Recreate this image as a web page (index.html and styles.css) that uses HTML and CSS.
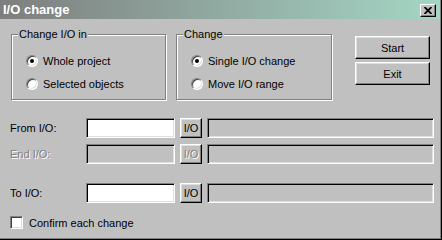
FILE: index.html
```html
<!DOCTYPE html>
<html>
<head>
<meta charset="utf-8">
<title>I/O change</title>
<link rel="stylesheet" href="styles.css">
</head>
<body>
<div class="window">
	<div class="titlebar">
		<span class="title">I/O change</span>
		<span class="close"><svg width="8" height="7" viewBox="0 0 8 7"><path d="M0.5 0 L7.5 7 M7.5 0 L0.5 7" stroke="#000" stroke-width="1.8"/></svg></span>
	</div>

	<div class="content">
		<div class="top">
			<fieldset class="group group-in">
				<legend>Change I/O in</legend>
				<div class="options">
					<label class="option"><span class="radio on"></span>Whole project</label>
					<label class="option"><span class="radio"></span>Selected objects</label>
				</div>
			</fieldset>
			<fieldset class="group group-mode">
				<legend>Change</legend>
				<div class="options">
					<label class="option"><span class="radio on"></span>Single I/O change</label>
					<label class="option"><span class="radio"></span>Move I/O range</label>
				</div>
			</fieldset>
			<div class="actions">
				<button class="btn">Start</button>
				<button class="btn">Exit</button>
			</div>
		</div>

		<div class="rows">
			<div class="row">
				<span class="row-label">From I/O:</span>
				<input type="text" class="field edit">
				<button class="btn-io">I/O</button>
				<input type="text" class="field info" readonly>
			</div>
			<div class="row disabled">
				<span class="row-label">End I/O:</span>
				<input type="text" class="field edit" disabled>
				<button class="btn-io" disabled>I/O</button>
				<input type="text" class="field info" readonly>
			</div>
			<div class="row row-far">
				<span class="row-label">To I/O:</span>
				<input type="text" class="field edit">
				<button class="btn-io">I/O</button>
				<input type="text" class="field info" readonly>
			</div>
		</div>

		<label class="confirm"><span class="check"></span>Confirm each change</label>
	</div>
</div>
</body>
</html>
```

FILE: styles.css
```css
html, body {
	margin: 0;
	padding: 0;
	background: #c0c0c0;
}

body {
	font-family: "Liberation Sans", Arial, sans-serif;
	font-size: 11px;
	color: #000;
}

.window {
	width: 442px;
	height: 240px;
	box-sizing: border-box;
	background: #c0c0c0;
	border-right: 1px solid #000;
	border-bottom: 1px solid #000;
	box-shadow: inset -1px -1px 0 #808080;
}

/* barra de titulo */
.titlebar {
	height: 19px;
	margin-right: 1px;
	display: flex;
	align-items: center;
	justify-content: space-between;
	padding: 0 4px 0 3px;
	background: linear-gradient(to right, #7e7e7e, #a4d6c4);
}
.title {
	color: #fff;
	font-weight: bold;
	font-size: 13px;
	line-height: 19px;
}
.close {
	width: 16px;
	height: 13px;
	box-sizing: border-box;
	margin-top: 1px;
	display: flex;
	align-items: center;
	justify-content: center;
	background: #c0c0c0;
	border: 1px solid;
	border-color: #fff #000 #000 #fff;
	box-shadow: inset -1px -1px 0 #808080;
}

.content {
	padding: 9px 0 0 10px;
}

/* grupos */
.top {
	display: flex;
	height: 72px;
}
.group {
	margin: 0;
	padding: 0;
	min-width: 0;
	height: 72px;
	box-sizing: border-box;
	border: 1px solid #808080;
	box-shadow: inset 1px 1px 0 #fff, 1px 1px 0 #fff;
}
.group legend {
	padding: 0 1px;
	margin-left: 6px;
	line-height: 13px;
	background: #c0c0c0;
}
.group-in {
	margin-left: 1px;
	width: 155px;
}
.group-mode {
	margin-left: 10px;
	width: 156px;
}
.options {
	display: flex;
	flex-direction: column;
	gap: 7px;
	padding: 12px 0 0 14px;
}
.option {
	display: flex;
	align-items: center;
	height: 16px;
}
.radio {
	position: relative;
	flex: none;
	width: 12px;
	height: 12px;
	box-sizing: border-box;
	margin-right: 5px;
	border-radius: 50%;
	background: #fff;
	border: 1px solid;
	border-color: #808080 #fff #fff #808080;
	box-shadow: inset 1px 1px 0 #404040, inset -1px -1px 0 #dfdfdf;
}
.radio.on::after {
	content: "";
	position: absolute;
	left: 3px;
	top: 3px;
	width: 4px;
	height: 4px;
	border-radius: 50%;
	background: #000;
}

/* botones */
.actions {
	display: flex;
	flex-direction: column;
	gap: 3px;
	margin: 8px 0 0 23px;
}
.btn, .btn-io {
	box-sizing: border-box;
	padding: 0;
	background: #c0c0c0;
	font-family: inherit;
	font-size: 11px;
	color: #000;
	border: 1px solid;
	border-color: #fff #000 #000 #fff;
	box-shadow: inset -1px -1px 0 #808080, inset 1px 1px 0 #dfdfdf;
	border-radius: 0;
}
.btn {
	width: 75px;
	height: 23px;
}

/* filas */
.rows {
	margin-top: 18px;
}
.row {
	display: flex;
	align-items: center;
	height: 20px;
}
.row + .row {
	margin-top: 6px;
}
.row.row-far {
	margin-top: 19px;
}
.row-label {
	width: 76px;
}
.field {
	height: 20px;
	box-sizing: border-box;
	margin: 0;
	padding: 0 2px;
	font-family: inherit;
	font-size: 11px;
	border: 1px solid;
	border-color: #808080 #fff #fff #808080;
	box-shadow: inset 1px 1px 0 #000, inset -1px -1px 0 #dfdfdf;
	border-radius: 0;
	outline: none;
}
.edit {
	width: 89px;
	background: #fff;
}
.info {
	width: 227px;
	margin-left: 5px;
	background: #c0c0c0;
}
.btn-io {
	width: 22px;
	height: 20px;
	margin-left: 5px;
}
.disabled .row-label,
.disabled .btn-io {
	color: #808080;
	text-shadow: 1px 1px 0 #fff;
}
.disabled .edit {
	background: #c0c0c0;
}

/* casilla */
.confirm {
	display: flex;
	align-items: center;
	height: 13px;
	margin-top: 13px;
}
.check {
	width: 13px;
	height: 13px;
	box-sizing: border-box;
	margin-right: 6px;
	background: #fff;
	border: 1px solid;
	border-color: #808080 #fff #fff #808080;
	box-shadow: inset 1px 1px 0 #404040, inset -1px -1px 0 #dfdfdf;
}
```
